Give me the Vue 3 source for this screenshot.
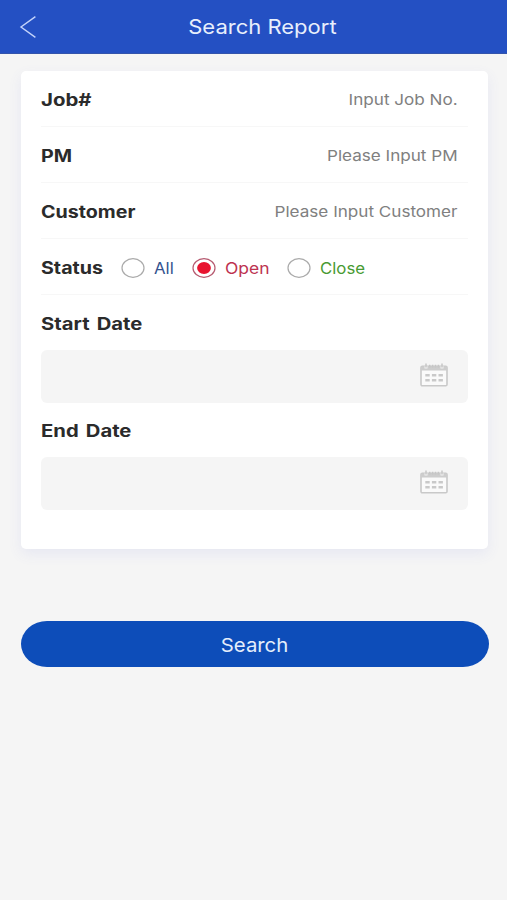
<script setup>
import { ref } from 'vue'

const fields = [
  { label: 'Job#', hint: 'Input Job No.', key: 'job' },
  { label: 'PM', hint: 'Please Input PM', key: 'pm' },
  { label: 'Customer', hint: 'Please Input Customer', key: 'customer' },
]
const statuses = ['All', 'Open', 'Close']
const status = ref('Open')
const dates = [
  { label: 'Start Date', key: 'start' },
  { label: 'End Date', key: 'end' },
]
</script>

<template>
  <main class="screen">
    <header class="bar">
      <svg class="back" viewBox="0 0 18 24" aria-hidden="true">
        <path d="M16.4 1.6 2 12 16.4 22.4" />
      </svg>
      <h1 class="title"><span class="wide">Search Report</span></h1>
    </header>

    <section class="card">
      <div v-for="f in fields" :key="f.key" class="row" :class="f.key">
        <span class="label wide">{{ f.label }}</span>
        <span class="hint wide">{{ f.hint }}</span>
      </div>
      <div class="row status">
        <span class="label wide">Status</span>
        <div
          v-for="s in statuses"
          :key="s"
          class="option"
          :class="s.toLowerCase()"
          @click="status = s"
        >
          <svg class="radio" :class="{ on: status === s }" viewBox="0 0 24 20">
            <ellipse class="ring" cx="12" cy="10" rx="11" ry="9.3" />
            <ellipse v-if="status === s" class="dot" cx="12" cy="10" rx="6.9" ry="5.9" />
          </svg>
          <span class="choice wide">{{ s }}</span>
        </div>
      </div>
      <div v-for="d in dates" :key="d.key" class="date" :class="d.key">
        <span class="label wide">{{ d.label }}</span>
        <div class="picker">
          <svg class="calendar" viewBox="0 0 28 24" aria-hidden="true">
            <rect x="1" y="3.2" width="26" height="19.6" rx="1.3" class="frame" />
            <path d="M1 3.5h26v4H1z" class="head" />
            <path d="M4.5 3.2h3v2.4h-3zM20.5 3.2h3v2.4h-3z" class="slot" />
            <path d="M6 .4v4M9.7 1.8v3M12.6 1.8v3M15.5 1.8v3M18.4 1.8v3M22 .4v4" class="rings" />
            <path d="M5.3 12.2h4.4M11.9 12.2h4.4M18.5 12.2h4.4M5.3 17.2h4.4M11.9 17.2h4.4M18.5 17.2h4.4" class="days" />
          </svg>
        </div>
      </div>
    </section>

    <button class="search" type="button"><span class="wide">Search</span></button>
  </main>
</template>

<style>
body {
  background: #f5f5f5;
}
</style>

<style scoped>
.screen {
  box-sizing: border-box;
  height: 900px;
  background: #f5f5f5;
  font-family: Inter, "Liberation Sans", sans-serif;
  overflow: hidden;
}
.wide {
  display: inline-block;
  white-space: nowrap;
  transform: scaleX(1.12);
  transform-origin: left center;
}
.bar {
  display: grid;
  grid-template-columns: 60px 1fr 43px;
  align-items: center;
  box-sizing: border-box;
  height: 54px;
  background: #2450c3;
  border-bottom: 1px solid #3454ab;
}
.back {
  width: 18px;
  height: 24px;
  margin-left: 19px;
  fill: none;
  stroke: #c3d3fa;
  stroke-width: 1.4;
}
.title {
  margin: 0;
  text-align: center;
  font-size: 20px;
  font-weight: 400;
  line-height: 28px;
  color: #e8effc;
}
.title .wide,
.search .wide {
  transform: scaleX(1.1);
  transform-origin: center;
}
.card {
  box-sizing: border-box;
  height: 478px;
  margin: 17px 19px 0 21px;
  padding: 0 20px;
  background: #fff;
  border-radius: 5px;
  box-shadow: 0 5px 14px rgba(90, 100, 220, 0.09);
}
.row {
  display: flex;
  align-items: center;
  justify-content: space-between;
  box-sizing: border-box;
  height: 56px;
  padding: 2px 10px 0 0;
  border-bottom: 1px solid #f7f7f7;
}
.row.status {
  justify-content: flex-start;
}
.label {
  font-size: 17px;
  font-weight: 700;
  line-height: 24px;
  color: #2b2b2b;
}
.row .label {
  transform: scaleX(1.155);
}
.row.job .label {
  transform: scaleX(1.2);
}
.hint {
  font-size: 15px;
  line-height: 24px;
  color: #808080;
  transform: scaleX(1.14);
  transform-origin: right center;
}
.row.status .label {
  width: 80px;
}
.option {
  display: flex;
  align-items: center;
}
.option.all {
  width: 71px;
}
.option.open {
  width: 95px;
}
.radio {
  width: 24px;
  height: 20px;
  margin-right: 9px;
}
.ring {
  fill: #fff;
  stroke: #aaa;
  stroke-width: 1.2;
}
.on .ring {
  stroke: #b65a70;
}
.dot {
  fill: #e8132f;
}
.choice {
  font-size: 16px;
  line-height: 24px;
  transform: scaleX(1.05);
}
.all .choice {
  color: #33528f;
}
.open .choice {
  color: #bd3350;
  transform: scaleX(1.09);
}
.close .choice {
  color: #489a32;
}
.date {
  height: 107px;
}
.date .label {
  display: block;
  height: 55px;
  line-height: 59px;
  word-spacing: 2px;
  transform: scaleX(1.19);
}
.picker {
  display: flex;
  align-items: center;
  justify-content: flex-end;
  box-sizing: border-box;
  height: 53px;
  padding-right: 20px;
  background: #f5f5f5;
  border-radius: 6px;
}
.calendar {
  width: 28px;
  height: 24px;
  margin-bottom: 3px;
}
.frame {
  fill: #fafafa;
  stroke: #c9c9c9;
  stroke-width: 1.6;
}
.head {
  fill: #cdcdcd;
}
.slot {
  fill: #f2f2f2;
}
.rings {
  fill: none;
  stroke: #c6c6c6;
  stroke-width: 1.5;
}
.days {
  fill: none;
  stroke: #c9c9c9;
  stroke-width: 2.4;
}
.search {
  display: flex;
  align-items: center;
  justify-content: center;
  width: 468px;
  height: 46px;
  margin: 72px 0 0 21px;
  padding: 2px 0 0;
  border: 0;
  border-radius: 26px / 23px;
  background: #0d4db9;
  color: #e5eefb;
  font-family: inherit;
  font-size: 19px;
  font-weight: 400;
}
.search .wide {
  transform: scaleX(1.07);
}
</style>
